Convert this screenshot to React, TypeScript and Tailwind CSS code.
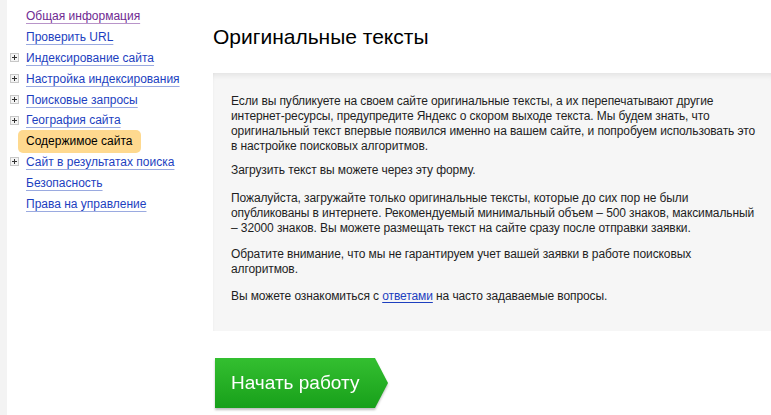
import React from "react";

const font = { fontFamily: '"Liberation Sans", Arial, sans-serif' };

function Plus() {
  return (
    <svg width="9" height="9" viewBox="0 0 9 9" className="block">
      <rect x="0.5" y="0.5" width="8" height="8" fill="#f4f4f4" stroke="#c8c8c8" />
      <path d="M2 4.5h5M4.5 2v5" stroke="#333" strokeWidth="1" />
    </svg>
  );
}

const items: { label: string; plus?: boolean; visited?: boolean; active?: boolean }[] = [
  { label: "Общая информация", visited: true },
  { label: "Проверить URL" },
  { label: "Индексирование сайта", plus: true },
  { label: "Настройка индексирования", plus: true },
  { label: "Поисковые запросы", plus: true },
  { label: "География сайта", plus: true },
  { label: "Содержимое сайта", active: true },
  { label: "Сайт в результатах поиска", plus: true },
  { label: "Безопасность" },
  { label: "Права на управление" },
];

export default function App() {
  return (
    <div className="flex w-[771px] h-[415px] overflow-hidden bg-white text-[12px]" style={font}>
      <div className="w-[7px] shrink-0 bg-[#f3f3f3]" />
      <div className="w-[206px] shrink-0 pt-[6px]">
        {items.map((it) => (
          <div key={it.label} className="flex items-center h-[20.8px]">
            <div className="w-[19px] shrink-0 flex items-center pl-[3px]">
              {it.plus ? <Plus /> : null}
            </div>
            {it.active ? (
              <span className="-ml-2 px-2 h-[23px] flex items-center rounded-[5px] bg-[#fed98f] text-black whitespace-nowrap">
                {it.label}
              </span>
            ) : (
              <a
                href="#"
                className={
                  "whitespace-nowrap underline underline-offset-[3px] " +
                  (it.visited
                    ? "text-[#6f2a92] decoration-[#b894c9]"
                    : "text-[#1d3fbf] decoration-[#9aaae0]")
                }
              >
                {it.label}
              </a>
            )}
          </div>
        ))}
      </div>
      <div className="flex-1 min-w-0">
        <h1 className="mt-[24px] h-[26px] leading-[26px] text-[21px] text-black font-normal whitespace-nowrap">
          Оригинальные тексты
        </h1>
        <div className="mt-[23px] h-[258px] bg-[#f6f6f6] shadow-[inset_0_7px_6px_-5px_rgba(0,0,0,0.09),inset_2px_0_3px_-2px_rgba(0,0,0,0.05)] pl-[18px] pt-[21px] text-[#1e1e1e] leading-[15px] tracking-[-0.1px] whitespace-nowrap">
          <p className="mb-[9px]">
            Если вы публикуете на своем сайте оригинальные тексты, а их перепечатывают другие
            <br />
            интернет-ресурсы, предупредите Яндекс о скором выходе текста. Мы будем знать, что
            <br />
            оригинальный текст впервые появился именно на вашем сайте, и попробуем использовать это
            <br />в настройке поисковых алгоритмов.
          </p>
          <p className="mb-[13px]">Загрузить текст вы можете через эту форму.</p>
          <p className="mb-[11px]">
            Пожалуйста, загружайте только оригинальные тексты, которые до сих пор не были
            <br />
            опубликованы в интернете. Рекомендуемый минимальный объем – 500 знаков, максимальный
            <br />– 32000 знаков. Вы можете размещать текст на сайте сразу после отправки заявки.
          </p>
          <p className="mb-[12px]">
            Обратите внимание, что мы не гарантируем учет вашей заявки в работе поисковых
            <br />
            алгоритмов.
          </p>
          <p>
            Вы можете ознакомиться с{" "}
            <a href="#" className="text-[#1d3fbf] underline underline-offset-2">
              ответами
            </a>{" "}
            на часто задаваемые вопросы.
          </p>
        </div>
        <div className="mt-[27px] ml-[2px] w-[175px] drop-shadow-[0_2px_1px_rgba(0,0,0,0.25)]">
          <button className="w-[173px] h-[50px] flex items-center pl-[16px] text-[19px] text-white bg-gradient-to-b from-[#33bf30] to-[#17a01a] [clip-path:polygon(0_0,160px_0,173px_50%,160px_100%,0_100%)]" style={font}>
            Начать работу
          </button>
        </div>
      </div>
    </div>
  );
}
